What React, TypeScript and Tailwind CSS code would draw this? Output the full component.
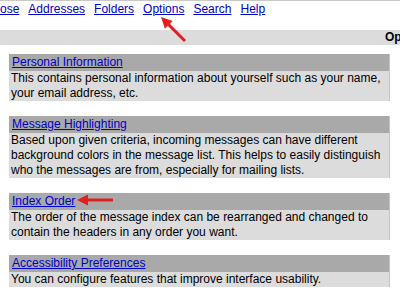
import React from 'react';

const navLinks = ['Compose', 'Addresses', 'Folders', 'Options', 'Search', 'Help'];

const sections = [
  {
    title: 'Personal Information',
    text: 'This contains personal information about yourself such as your name, your email address, etc.',
  },
  {
    title: 'Message Highlighting',
    text: 'Based upon given criteria, incoming messages can have different background colors in the message list. This helps to easily distinguish who the messages are from, especially for mailing lists.',
  },
  {
    title: 'Index Order',
    text: 'The order of the message index can be rearranged and changed to contain the headers in any order you want.',
  },
  {
    title: 'Accessibility Preferences',
    text: 'You can configure features that improve interface usability.',
  },
];

const Arrow = ({ x1, y1, x2, y2 }: { x1: number; y1: number; x2: number; y2: number }) => {
  // line from tail (x1,y1) to tip (x2,y2) with a filled head
  const dx = x2 - x1;
  const dy = y2 - y1;
  const len = Math.hypot(dx, dy);
  const ux = dx / len;
  const uy = dy / len;
  const headLen = 11;
  const headW = 5.5;
  const bx = x2 - ux * headLen;
  const by = y2 - uy * headLen;
  const p1 = `${bx - uy * headW},${by + ux * headW}`;
  const p2 = `${bx + uy * headW},${by - ux * headW}`;
  return (
    <g>
      <line x1={x1} y1={y1} x2={bx + ux * 2} y2={by + uy * 2} stroke="#e3201f" strokeWidth={3} />
      <polygon points={`${x2},${y2} ${p1} ${p2}`} fill="#e3201f" />
    </g>
  );
};

export default function App() {
  return (
    <div
      className="relative w-[400px] h-[291px] overflow-hidden bg-white text-[12px] leading-[15px] text-black"
      style={{ fontFamily: '"Liberation Sans", Arial, sans-serif' }}
    >
      <div className="h-px bg-[#c8c8c8]" />

      {/* menu row */}
      <div className="flex gap-[9px] ml-[-32px] pt-[1px] whitespace-nowrap">
        {navLinks.map(l => (
          <a key={l} href="#" className="text-[#0000cc] underline">
            {l}
          </a>
        ))}
      </div>

      {/* title bar */}
      <div className="mt-[13px] h-[15px] bg-[#dcdcdc] pl-[385px] whitespace-nowrap font-bold">
        Options
      </div>

      {/* option sections */}
      <div className="mt-[9px] ml-[9px] w-[381px] flex flex-col gap-[15px]">
        {sections.map(s => (
          <div key={s.title} className="border-r border-[#c4c4c4]">
            <div className="bg-[#a9a9a9] h-[17px] pt-[1px] pl-[3px]">
              <a href="#" className="text-[#0000cc] underline">
                {s.title}
              </a>
            </div>
            <div className="bg-[#dcdcdc] px-[2px]">{s.text}</div>
          </div>
        ))}
      </div>

      {/* annotation arrows */}
      <svg className="absolute inset-0 pointer-events-none" width={400} height={291}>
        <Arrow x1={185} y1={41} x2={161} y2={17} />
        <Arrow x1={113} y1={200} x2={77} y2={200} />
      </svg>
    </div>
  );
}
